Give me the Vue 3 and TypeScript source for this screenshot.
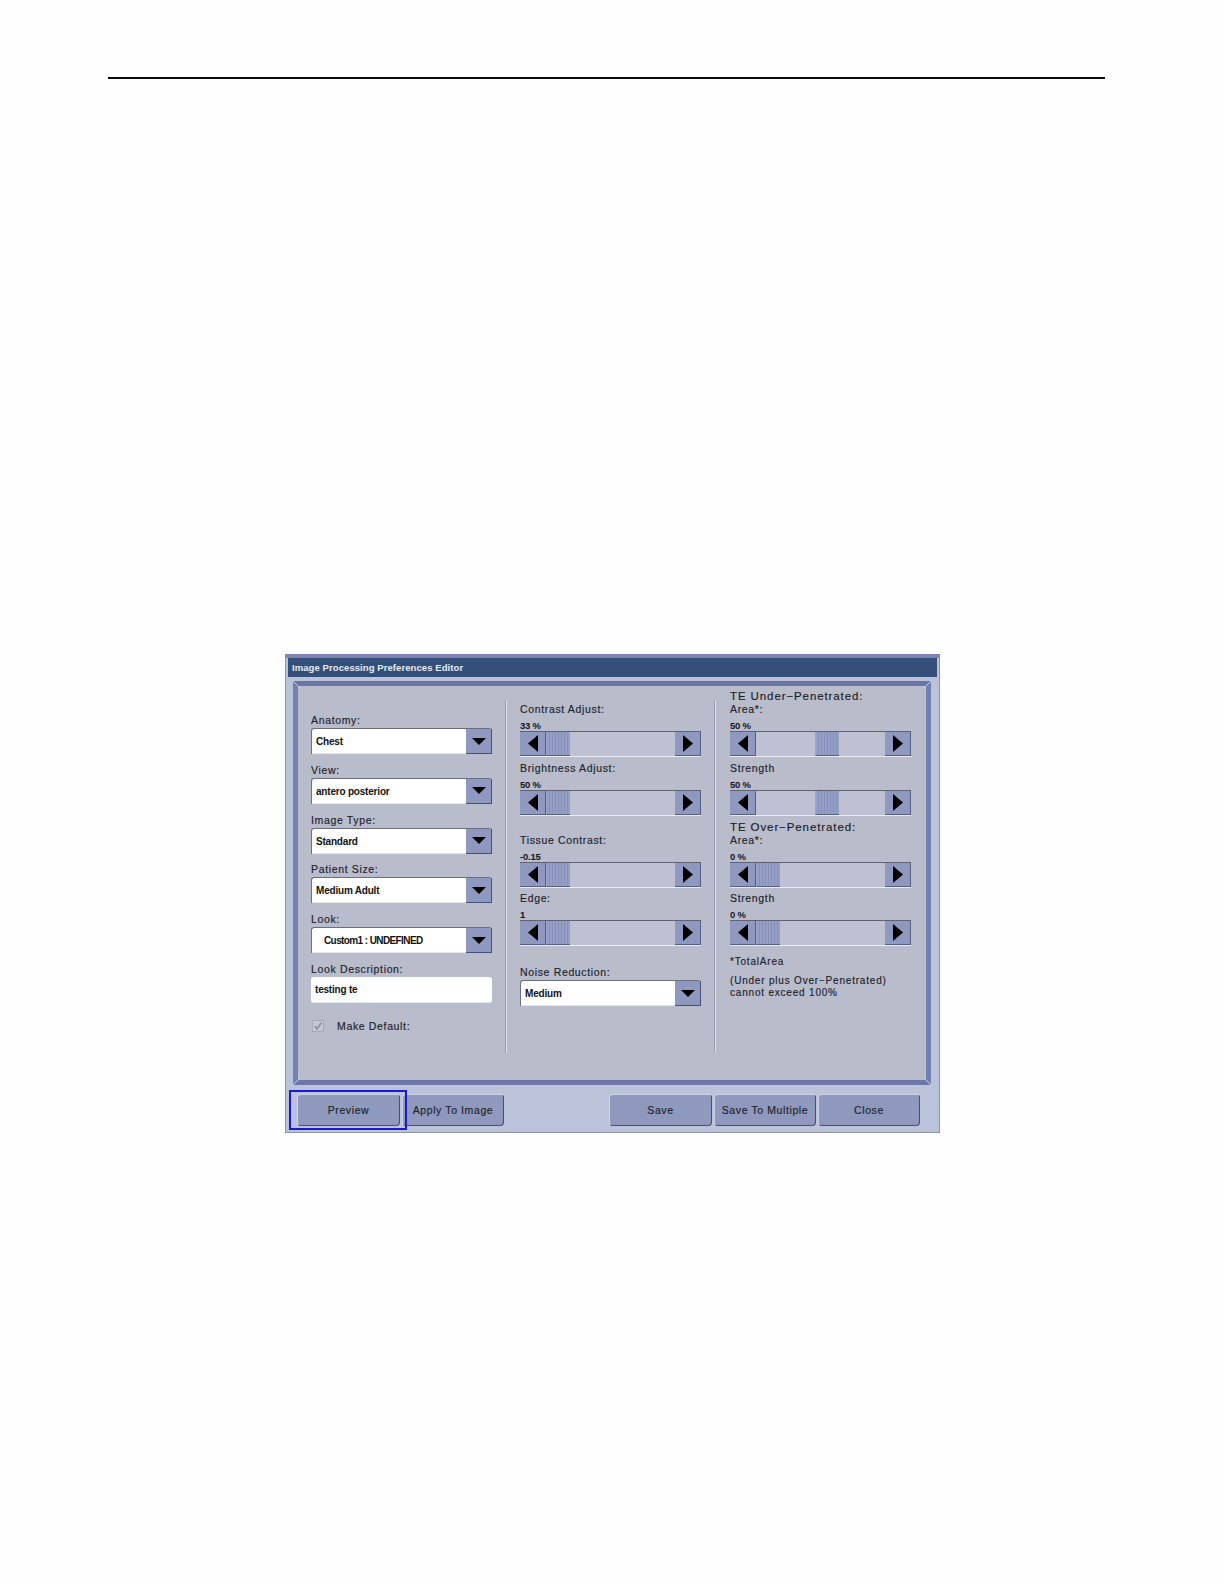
<script setup lang="ts">
interface Slider { label: string; value: string; pos: number; head?: string }

const selects = [
  { label: 'Anatomy:', value: 'Chest' },
  { label: 'View:', value: 'antero posterior' },
  { label: 'Image Type:', value: 'Standard' },
  { label: 'Patient Size:', value: 'Medium Adult' },
  { label: 'Look:', value: 'Custom1 : UNDEFINED', look: true },
]

const midSliders: Slider[] = [
  { label: 'Contrast Adjust:', value: '33 %', pos: 0 },
  { label: 'Brightness Adjust:', value: '50 %', pos: 0 },
  { label: 'Tissue Contrast:', value: '-0.15', pos: 0 },
  { label: 'Edge:', value: '1', pos: 0 },
]

const rightSliders: Slider[] = [
  { head: 'TE Under\u2212Penetrated:', label: 'Area*:', value: '50 %', pos: 59 },
  { label: 'Strength', value: '50 %', pos: 59 },
  { head: 'TE Over\u2212Penetrated:', label: 'Area*:', value: '0 %', pos: 0 },
  { label: 'Strength', value: '0 %', pos: 0 },
]

const corners = ['tl', 'tr', 'bl', 'br']
</script>

<template>
  <div class="page">
    <div class="rule"></div>
    <div class="dialog">
      <div class="title">Image Processing Preferences Editor</div>
      <div class="panel">
        <span v-for="c in corners" :key="c" class="corner" :class="c"></span>
        <div class="cols">
          <div class="col col-left">
            <div v-for="s in selects" :key="s.label" class="field">
              <div class="label">{{ s.label }}</div>
              <div class="select">
                <div class="select-value" :class="{ 'look-value': s.look }">{{ s.value }}</div>
                <div class="select-btn">
                  <svg width="14" height="7" viewBox="0 0 14 7"><path d="M0 0H14L7 7Z" fill="#000" /></svg>
                </div>
              </div>
            </div>
            <div class="field">
              <div class="label">Look Description:</div>
              <div class="text-input">testing te</div>
            </div>
            <div class="default-row">
              <span class="check">
                <svg width="10" height="10" viewBox="0 0 10 10"><path d="M2 5L4 8L8.5 1.5" fill="none" stroke="#8b8f9e" stroke-width="1.6" /></svg>
              </span>
              <span class="label default-label">Make Default:</span>
            </div>
          </div>

          <div class="divider"></div>

          <div class="col col-mid">
            <div v-for="(s, i) in midSliders" :key="s.label" class="block" :class="'mid-' + i">
              <div class="label">{{ s.label }}</div>
              <div class="value">{{ s.value }}</div>
              <div class="slider">
                <div class="arrow-btn">
                  <svg width="10" height="17" viewBox="0 0 10 17"><path d="M10 0V17L0 8.5Z" fill="#000" /></svg>
                </div>
                <div class="track">
                  <div class="thumb" :style="{ marginLeft: s.pos + 'px' }"></div>
                </div>
                <div class="arrow-btn">
                  <svg width="10" height="17" viewBox="0 0 10 17"><path d="M0 0V17L10 8.5Z" fill="#000" /></svg>
                </div>
              </div>
            </div>
            <div class="noise">
              <div class="label">Noise Reduction:</div>
              <div class="select">
                <div class="select-value">Medium</div>
                <div class="select-btn">
                  <svg width="14" height="7" viewBox="0 0 14 7"><path d="M0 0H14L7 7Z" fill="#000" /></svg>
                </div>
              </div>
            </div>
          </div>

          <div class="divider"></div>

          <div class="col col-right">
            <div v-for="(s, i) in rightSliders" :key="i" class="rblock" :class="'right-' + i">
              <div v-if="s.head" class="head">{{ s.head }}</div>
              <div class="block">
                <div class="label">{{ s.label }}</div>
                <div class="value">{{ s.value }}</div>
                <div class="slider">
                  <div class="arrow-btn">
                    <svg width="10" height="17" viewBox="0 0 10 17"><path d="M10 0V17L0 8.5Z" fill="#000" /></svg>
                  </div>
                  <div class="track">
                    <div class="thumb" :style="{ marginLeft: s.pos + 'px' }"></div>
                  </div>
                  <div class="arrow-btn">
                    <svg width="10" height="17" viewBox="0 0 10 17"><path d="M0 0V17L10 8.5Z" fill="#000" /></svg>
                  </div>
                </div>
              </div>
            </div>
            <div class="note note-first">*TotalArea</div>
            <div class="note note-second">(Under plus Over&#8722;Penetrated)<br />cannot exceed 100%</div>
          </div>
        </div>
      </div>
      <div class="footer">
        <button class="btn btn-preview">Preview</button>
        <button class="btn btn-apply">Apply To Image</button>
        <div class="spacer"></div>
        <button class="btn btn-save">Save</button>
        <button class="btn btn-multi">Save To Multiple</button>
        <button class="btn btn-close">Close</button>
      </div>
    </div>
  </div>
</template>

<style scoped>
.page {
  width: 1224px;
  height: 1584px;
  background: #fefefe;
  overflow: hidden;
  font-family: "Liberation Sans", Arial, sans-serif;
  color: #15171f;
}
.rule {
  margin: 77px 0 0 108px;
  width: 997px;
  height: 2px;
  background: #0a0a0a;
}
.dialog {
  box-sizing: border-box;
  margin: 575px 0 0 285px;
  width: 655px;
  height: 479px;
  padding: 0 2px 0 2px;
  border: 1px solid #8c92a8;
  border-top: 4px solid #7f83ad;
  background: #bac3da;
}
.title {
  height: 19px;
  line-height: 19px;
  padding-left: 4px;
  background: #34507a;
  color: #e6eaf2;
  font-size: 9.5px;
  font-weight: bold;
  letter-spacing: 0.08px;
}
.panel {
  position: relative;
  box-sizing: border-box;
  margin: 4px 6px 0 5px;
  height: 404px;
  border: 5px solid;
  border-color: #6c74a6 #717fb1 #6c77a8 #7380b2;
  background: #b9bccb;
}
.corner {
  position: absolute;
  width: 7px;
  height: 7px;
}
.corner.tl { left: -5px; top: -5px; background: linear-gradient(45deg, transparent 44%, #c9cfe0 44%, #c9cfe0 56%, transparent 56%); }
.corner.br { right: -5px; bottom: -5px; background: linear-gradient(45deg, transparent 44%, #c9cfe0 44%, #c9cfe0 56%, transparent 56%); }
.corner.tr { right: -5px; top: -5px; background: linear-gradient(135deg, transparent 44%, #c9cfe0 44%, #c9cfe0 56%, transparent 56%); }
.corner.bl { left: -5px; bottom: -5px; background: linear-gradient(135deg, transparent 44%, #c9cfe0 44%, #c9cfe0 56%, transparent 56%); }
.cols {
  display: grid;
  grid-template-columns: 208px 1px 208px 1px 210px;
  padding-top: 5px;
  align-items: start;
}
.divider {
  margin-top: 9px;
  height: 353px;
  background: #dfe2ea;
  box-shadow: -1px 0 0 #989cae;
}
.col-left { padding: 22px 0 0 13px; }
.col-mid { padding: 11px 0 0 13px; }
.col-right { padding: 0 0 0 14px; }

.label {
  height: 14px;
  line-height: 14px;
  font-size: 10.5px;
  letter-spacing: 0.65px;
  white-space: nowrap;
  color: #20222c;
  -webkit-text-stroke: 0.15px #20222c;
}
.value {
  height: 10px;
  line-height: 10px;
  margin-top: 5px;
  font-size: 9.5px;
  font-weight: bold;
  letter-spacing: -0.2px;
  color: #15171f;
  white-space: nowrap;
}

.field { width: 181px; margin-bottom: 8.8px; }
.select {
  display: flex;
  box-sizing: border-box;
  margin-top: 1px;
  width: 181px;
  height: 26px;
  border-top: 1px solid #6a6e80;
  border-left: 1px solid #6a6e80;
  border-radius: 3px 3px 0 0;
  background: #fff;
}
.select-value {
  flex: 1;
  padding-left: 4px;
  line-height: 25px;
  font-size: 10px;
  font-weight: bold;
  letter-spacing: -0.2px;
  color: #111;
  white-space: nowrap;
  border-bottom: 1px solid #e4e6ee;
}
.look-value { padding-left: 12px; letter-spacing: -0.6px; }
.select-btn {
  box-sizing: border-box;
  width: 26px;
  display: flex;
  align-items: center;
  justify-content: center;
  background: #8f99c0;
  border-right: 1px solid #474f78;
  border-bottom: 1px solid #474f78;
}
.text-input {
  box-sizing: border-box;
  margin-top: 1px;
  width: 181px;
  height: 26px;
  padding-left: 4px;
  line-height: 25px;
  font-size: 10px;
  font-weight: bold;
  letter-spacing: -0.2px;
  color: #111;
  background: #fff;
  border-radius: 3px;
  border-bottom: 1px solid #e6e8ef;
}
.default-row {
  display: flex;
  align-items: center;
  margin-top: 16px;
  height: 14px;
  padding-left: 1px;
}
.check {
  box-sizing: border-box;
  width: 12px;
  height: 12px;
  display: flex;
  align-items: center;
  justify-content: center;
  border: 1px solid #a4a8b8;
  background: #c6c9d5;
}
.default-label { margin-left: 13px; }

.block { width: 181px; height: 55px; margin-bottom: 4px; }
.mid-2 { margin-top: 17px; margin-bottom: 3px; }
.noise { margin-top: 19px; width: 181px; }

.slider {
  box-sizing: border-box;
  display: flex;
  width: 181px;
  height: 26px;
  border-top: 1px solid #5e6274;
  border-bottom: 1px solid #e9ecf3;
  background: #bdc1d1;
}
.arrow-btn {
  box-sizing: border-box;
  flex: none;
  width: 26px;
  display: flex;
  align-items: center;
  justify-content: center;
  background: #8f99c0;
  border-right: 1px solid #565e86;
  border-bottom: 1px solid #565e86;
}
.track { flex: 1; display: flex; }
.thumb {
  box-sizing: border-box;
  width: 24px;
  background: repeating-linear-gradient(90deg, #959fc5 0 2px, #8792bb 2px 3px);
  border-left: 1px solid #9aa5cb;
  border-bottom: 1px solid #565e86;
}

.head {
  height: 11px;
  line-height: 11px;
  font-size: 11.5px;
  letter-spacing: 0.9px;
  color: #1a1c26;
  white-space: nowrap;
  -webkit-text-stroke: 0.15px #1a1c26;
}
.right-2 { margin-top: 6px; }
.right-2 .block { margin-bottom: 3px; }
.note {
  font-size: 10px;
  letter-spacing: 0.8px;
  line-height: 12px;
  color: #20222c;
  white-space: nowrap;
  -webkit-text-stroke: 0.15px #20222c;
}
.note-first { margin-top: 10px; }
.note-second { margin-top: 7px; }

.footer {
  display: flex;
  margin: 9px 0 0 9px;
  height: 32px;
}
.spacer { width: 105px; }
.btn {
  box-sizing: border-box;
  height: 32px;
  padding: 0;
  font-family: "Liberation Sans", Arial, sans-serif;
  font-size: 10.5px;
  letter-spacing: 0.6px;
  color: #20222c;
  -webkit-text-stroke: 0.15px #20222c;
  background: #8f99be;
  border: 1px solid;
  border-color: #ccd3e6 #474e72 #474e72 #ccd3e6;
  border-radius: 4px;
}
.btn-preview { position: relative; width: 103px; margin-right: 2px; }
.btn-preview::after {
  content: "";
  position: absolute;
  left: -9px;
  right: -8px;
  top: -5px;
  bottom: -5px;
  border: 2px solid #1a1ad0;
}
.btn-apply { width: 102px; }
.btn-save { width: 103px; margin-right: 2px; }
.btn-multi { width: 102px; margin-right: 2px; }
.btn-close { width: 102px; }
</style>

<style>
html, body { margin: 0; background: #fefefe; }
</style>
